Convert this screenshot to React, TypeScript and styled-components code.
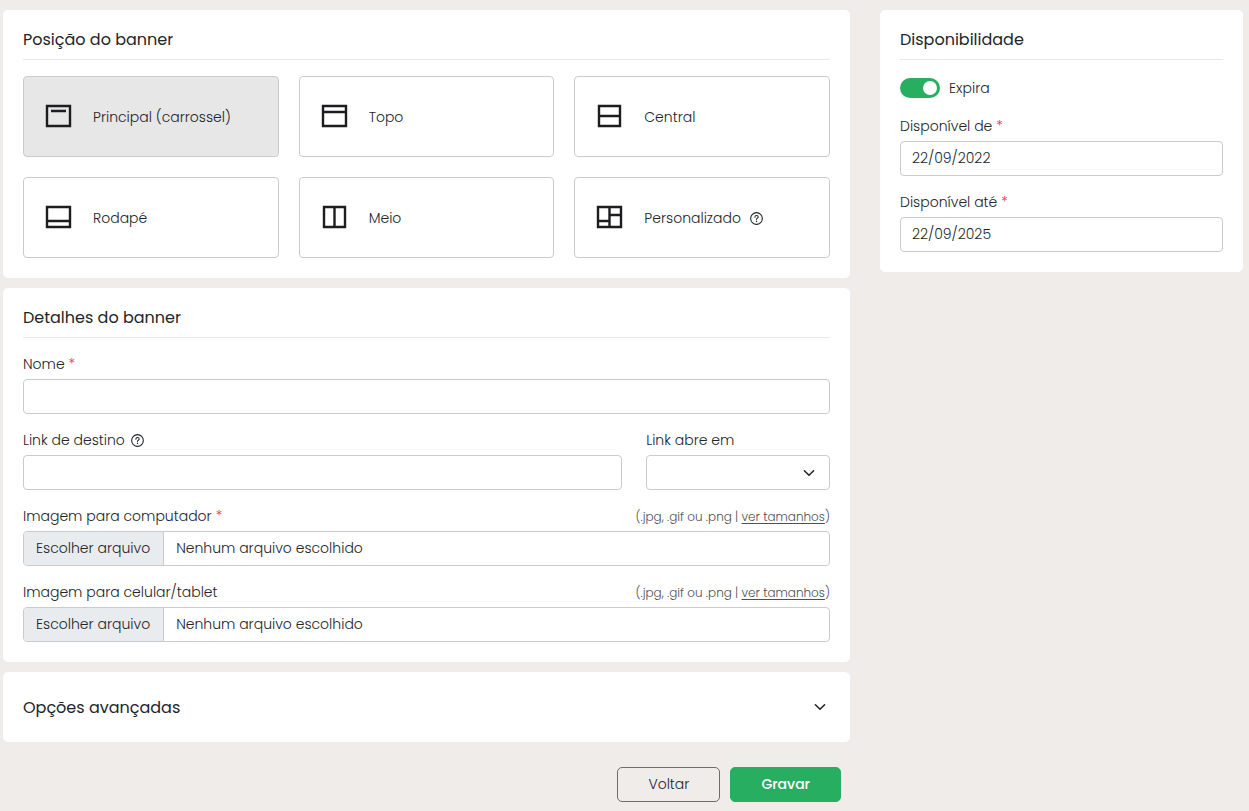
import React, { useState } from "react";
import styled, { createGlobalStyle } from "styled-components";

const GlobalStyle = createGlobalStyle`
  *, *::before, *::after { box-sizing: border-box; }
  body {
    margin: 0;
    background: #f0ecea;
    color: #212529;
    font-family: Poppins, Inter, "Open Sans", sans-serif;
    font-size: 14px;
    font-weight: 300;
    line-height: 21px;
  }
  button, input, select { font: inherit; color: inherit; }
`;

const Page = styled.form`
  display: grid;
  grid-template-columns: minmax(0, 7fr) minmax(0, 3fr);
  gap: 30px;
  align-items: start;
  padding: 10px 6px 9px 3px;
`;

const Column = styled.div`
  display: flex;
  flex-direction: column;
  gap: 10px;
`;

const Card = styled.section`
  display: flex;
  flex-direction: column;
  gap: 16px;
  padding: 20px;
  background: #fff;
  border-radius: 5px;
`;

const Title = styled.h2`
  margin: 0;
  padding-bottom: 9px;
  border-bottom: 1px solid #e9e9ea;
  font-size: 16px;
  font-weight: 400;
  line-height: 20px;
`;

const Tiles = styled.div`
  display: grid;
  grid-template-columns: repeat(3, minmax(0, 1fr));
  gap: 20px;
`;

const HiddenInput = styled.input`
  position: absolute;
  width: 1px;
  height: 1px;
  margin: 0;
  opacity: 0;
`;

const Tile = styled.label<{ $active: boolean }>`
  position: relative;
  display: flex;
  align-items: center;
  gap: 18px;
  height: 81px;
  padding: 0 19px;
  border: 1px solid #c9cccf;
  border-radius: 4px;
  background: ${(p) => (p.$active ? "#e7e7e7" : "#fff")};
  cursor: pointer;
`;

const TileIcon = styled.svg`
  flex: none;
  width: 32px;
  height: 31px;
  fill: none;
  stroke: #1d1d20;
  stroke-width: 2.4;
`;

const WithIcon = styled.span<{ $gap: number }>`
  display: inline-flex;
  align-items: center;
  gap: ${(p) => p.$gap}px;
`;

const TileText = styled(WithIcon)`
  padding-top: 2px;
`;

const Field = styled.div<{ $span?: number }>`
  display: flex;
  flex-direction: column;
  gap: 4px;
  min-width: 0;
  grid-column: span ${(p) => p.$span ?? 1};
`;

const FieldRow = styled.div`
  display: grid;
  grid-template-columns: repeat(12, minmax(0, 1fr));
  gap: 24px;
`;

const LabelLine = styled.div`
  display: flex;
  justify-content: space-between;
`;

const Required = styled.span`
  margin-left: 4px;
  color: #dc3545;
`;

const Hint = styled.span`
  color: #4d5154;
  font-size: 12px;
`;

const HintLink = styled.a`
  color: inherit;
  text-decoration: underline;
  text-underline-offset: 2px;
`;

const TextInput = styled.input`
  width: 100%;
  height: 35px;
  padding: 0 11px;
  border: 1px solid #c9cccf;
  border-radius: 4px;
  background: #fff;
`;

const SelectWrap = styled.div`
  display: grid;
  align-items: center;
  > * { grid-area: 1 / 1; }
  > svg { justify-self: end; margin-right: 15px; pointer-events: none; }
`;

const Select = styled.select`
  width: 100%;
  height: 35px;
  padding: 0 36px 0 11px;
  border: 1px solid #c9cccf;
  border-radius: 4px;
  background: #fff;
  appearance: none;
`;

const FileBox = styled.label`
  position: relative;
  display: flex;
  height: 35px;
  overflow: hidden;
  border: 1px solid #c9cccf;
  border-radius: 4px;
  line-height: 33px;
  cursor: pointer;
`;

const FileButton = styled.span`
  padding: 0 13px 0 12px;
  border-right: 1px solid #c9cccf;
  background: #e9ecef;
`;

const FileName = styled.span`
  padding: 0 12px;
`;

const SwitchRow = styled.label`
  display: flex;
  align-items: center;
  gap: 9px;
  height: 24px;
`;

const Switch = styled.input`
  flex: none;
  display: flex;
  align-items: center;
  width: 40px;
  height: 20px;
  margin: 0;
  padding: 0 3px;
  border-radius: 10px;
  background: #adb5bd;
  appearance: none;
  &::before {
    content: "";
    width: 14px;
    height: 14px;
    border-radius: 50%;
    background: #fff;
  }
  &:checked {
    justify-content: flex-end;
    background: #28ae60;
  }
`;

const Accordion = styled.button`
  display: flex;
  align-items: center;
  justify-content: space-between;
  height: 70px;
  padding: 0 24px 0 20px;
  border: 0;
  border-radius: 5px;
  background: #fff;
  font-size: 16px;
  font-weight: 400;
`;

const Actions = styled.div`
  display: flex;
  justify-content: flex-end;
  gap: 10px;
  padding: 15px 9px 0;
`;

const Button = styled.button<{ $primary?: boolean }>`
  height: 35px;
  padding: 0 30px;
  border: 1px solid ${(p) => (p.$primary ? "#28ae60" : "#6f6c6b")};
  border-radius: 5px;
  background: ${(p) => (p.$primary ? "#28ae60" : "transparent")};
  color: ${(p) => (p.$primary ? "#fff" : "#212529")};
  font-weight: ${(p) => (p.$primary ? 500 : 300)};
`;

const Chevron = () => (
  <svg width="12" height="12" viewBox="0 0 12 12" fill="none" stroke="#212529" strokeWidth="1.6" strokeLinecap="round" strokeLinejoin="round" aria-hidden="true">
    <path d="M1.4 3.8 6 8.3l4.6-4.5" />
  </svg>
);

const Help = () => (
  <svg width="13" height="13" viewBox="0 0 12 12" fill="none" stroke="#212529" strokeWidth="1" strokeLinecap="round" strokeLinejoin="round" aria-hidden="true">
    <circle cx="6" cy="6" r="5.4" />
    <path d="M4.5 4.8c0-1 .7-1.5 1.5-1.5s1.6.5 1.6 1.4c0 1.1-1.6 1.1-1.6 2.1" />
    <path d="M6 8.5v.2" strokeWidth="1.2" />
  </svg>
);

const positions = [
  { id: "principal", label: "Principal (carrossel)", path: "M4 5h23v20H4zM8 10h15" },
  { id: "topo", label: "Topo", path: "M4 5h23v20H4zM4 11h23" },
  { id: "central", label: "Central", path: "M5 5h21v20H5zM5 15h21" },
  { id: "rodape", label: "Rodapé", path: "M4 5h23v20H4zM4 19h23" },
  { id: "meio", label: "Meio", path: "M5 5h21v20H5zM15.5 5v20" },
  { id: "personalizado", label: "Personalizado", path: "M4 5h23v20H4zM15.5 5v20M4 19h11M16 13h11", help: true },
];

const FileField = ({ id, label, required }: { id: string; label: string; required?: boolean }) => {
  const [name, setName] = useState("Nenhum arquivo escolhido");
  return (
    <Field>
      <LabelLine>
        <label htmlFor={id}>
          {label}
          {required && <Required>*</Required>}
        </label>
        <Hint>
          (.jpg, .gif ou .png | <HintLink href="#tamanhos">ver tamanhos</HintLink>)
        </Hint>
      </LabelLine>
      <FileBox>
        <HiddenInput
          id={id}
          type="file"
          accept=".jpg,.gif,.png"
          onChange={(e) => setName(e.target.files?.[0]?.name ?? "Nenhum arquivo escolhido")}
        />
        <FileButton>Escolher arquivo</FileButton>
        <FileName>{name}</FileName>
      </FileBox>
    </Field>
  );
};

const DateField = ({ id, label, value }: { id: string; label: string; value: string }) => (
  <Field>
    <LabelLine>
      <label htmlFor={id}>
        {label}
        <Required>*</Required>
      </label>
    </LabelLine>
    <TextInput id={id} type="text" defaultValue={value} />
  </Field>
);

export default function App() {
  const [position, setPosition] = useState("principal");
  return (
    <>
      <GlobalStyle />
      <Page onSubmit={(e) => e.preventDefault()}>
        <Column>
          <Card>
            <Title>Posição do banner</Title>
            <Tiles>
              {positions.map((p) => (
                <Tile key={p.id} $active={p.id === position}>
                  <HiddenInput
                    type="radio"
                    name="position"
                    checked={p.id === position}
                    onChange={() => setPosition(p.id)}
                  />
                  <TileIcon viewBox="0 0 32 31" aria-hidden="true">
                    <path d={p.path} />
                  </TileIcon>
                  <TileText $gap={9}>
                    {p.label}
                    {p.help && <Help />}
                  </TileText>
                </Tile>
              ))}
            </Tiles>
          </Card>
          <Card>
            <Title>Detalhes do banner</Title>
            <Field>
              <LabelLine>
                <label htmlFor="nome">
                  Nome<Required>*</Required>
                </label>
              </LabelLine>
              <TextInput id="nome" type="text" />
            </Field>
            <FieldRow>
              <Field $span={9}>
                <LabelLine>
                  <label htmlFor="link">
                    <WithIcon $gap={6}>
                      Link de destino <Help />
                    </WithIcon>
                  </label>
                </LabelLine>
                <TextInput id="link" type="text" />
              </Field>
              <Field $span={3}>
                <LabelLine>
                  <label htmlFor="alvo">Link abre em</label>
                </LabelLine>
                <SelectWrap>
                  <Select id="alvo" defaultValue="">
                    <option value="" />
                  </Select>
                  <Chevron />
                </SelectWrap>
              </Field>
            </FieldRow>
            <FileField id="img-computador" label="Imagem para computador" required />
            <FileField id="img-celular" label="Imagem para celular/tablet" />
          </Card>
          <Accordion type="button" aria-expanded="false">
            Opções avançadas
            <Chevron />
          </Accordion>
          <Actions>
            <Button type="button">Voltar</Button>
            <Button type="submit" $primary>Gravar</Button>
          </Actions>
        </Column>
        <Card>
          <Title>Disponibilidade</Title>
          <SwitchRow>
            <Switch type="checkbox" role="switch" defaultChecked />
            Expira
          </SwitchRow>
          <DateField id="de" label="Disponível de" value="22/09/2022" />
          <DateField id="ate" label="Disponível até" value="22/09/2025" />
        </Card>
      </Page>
    </>
  );
}
